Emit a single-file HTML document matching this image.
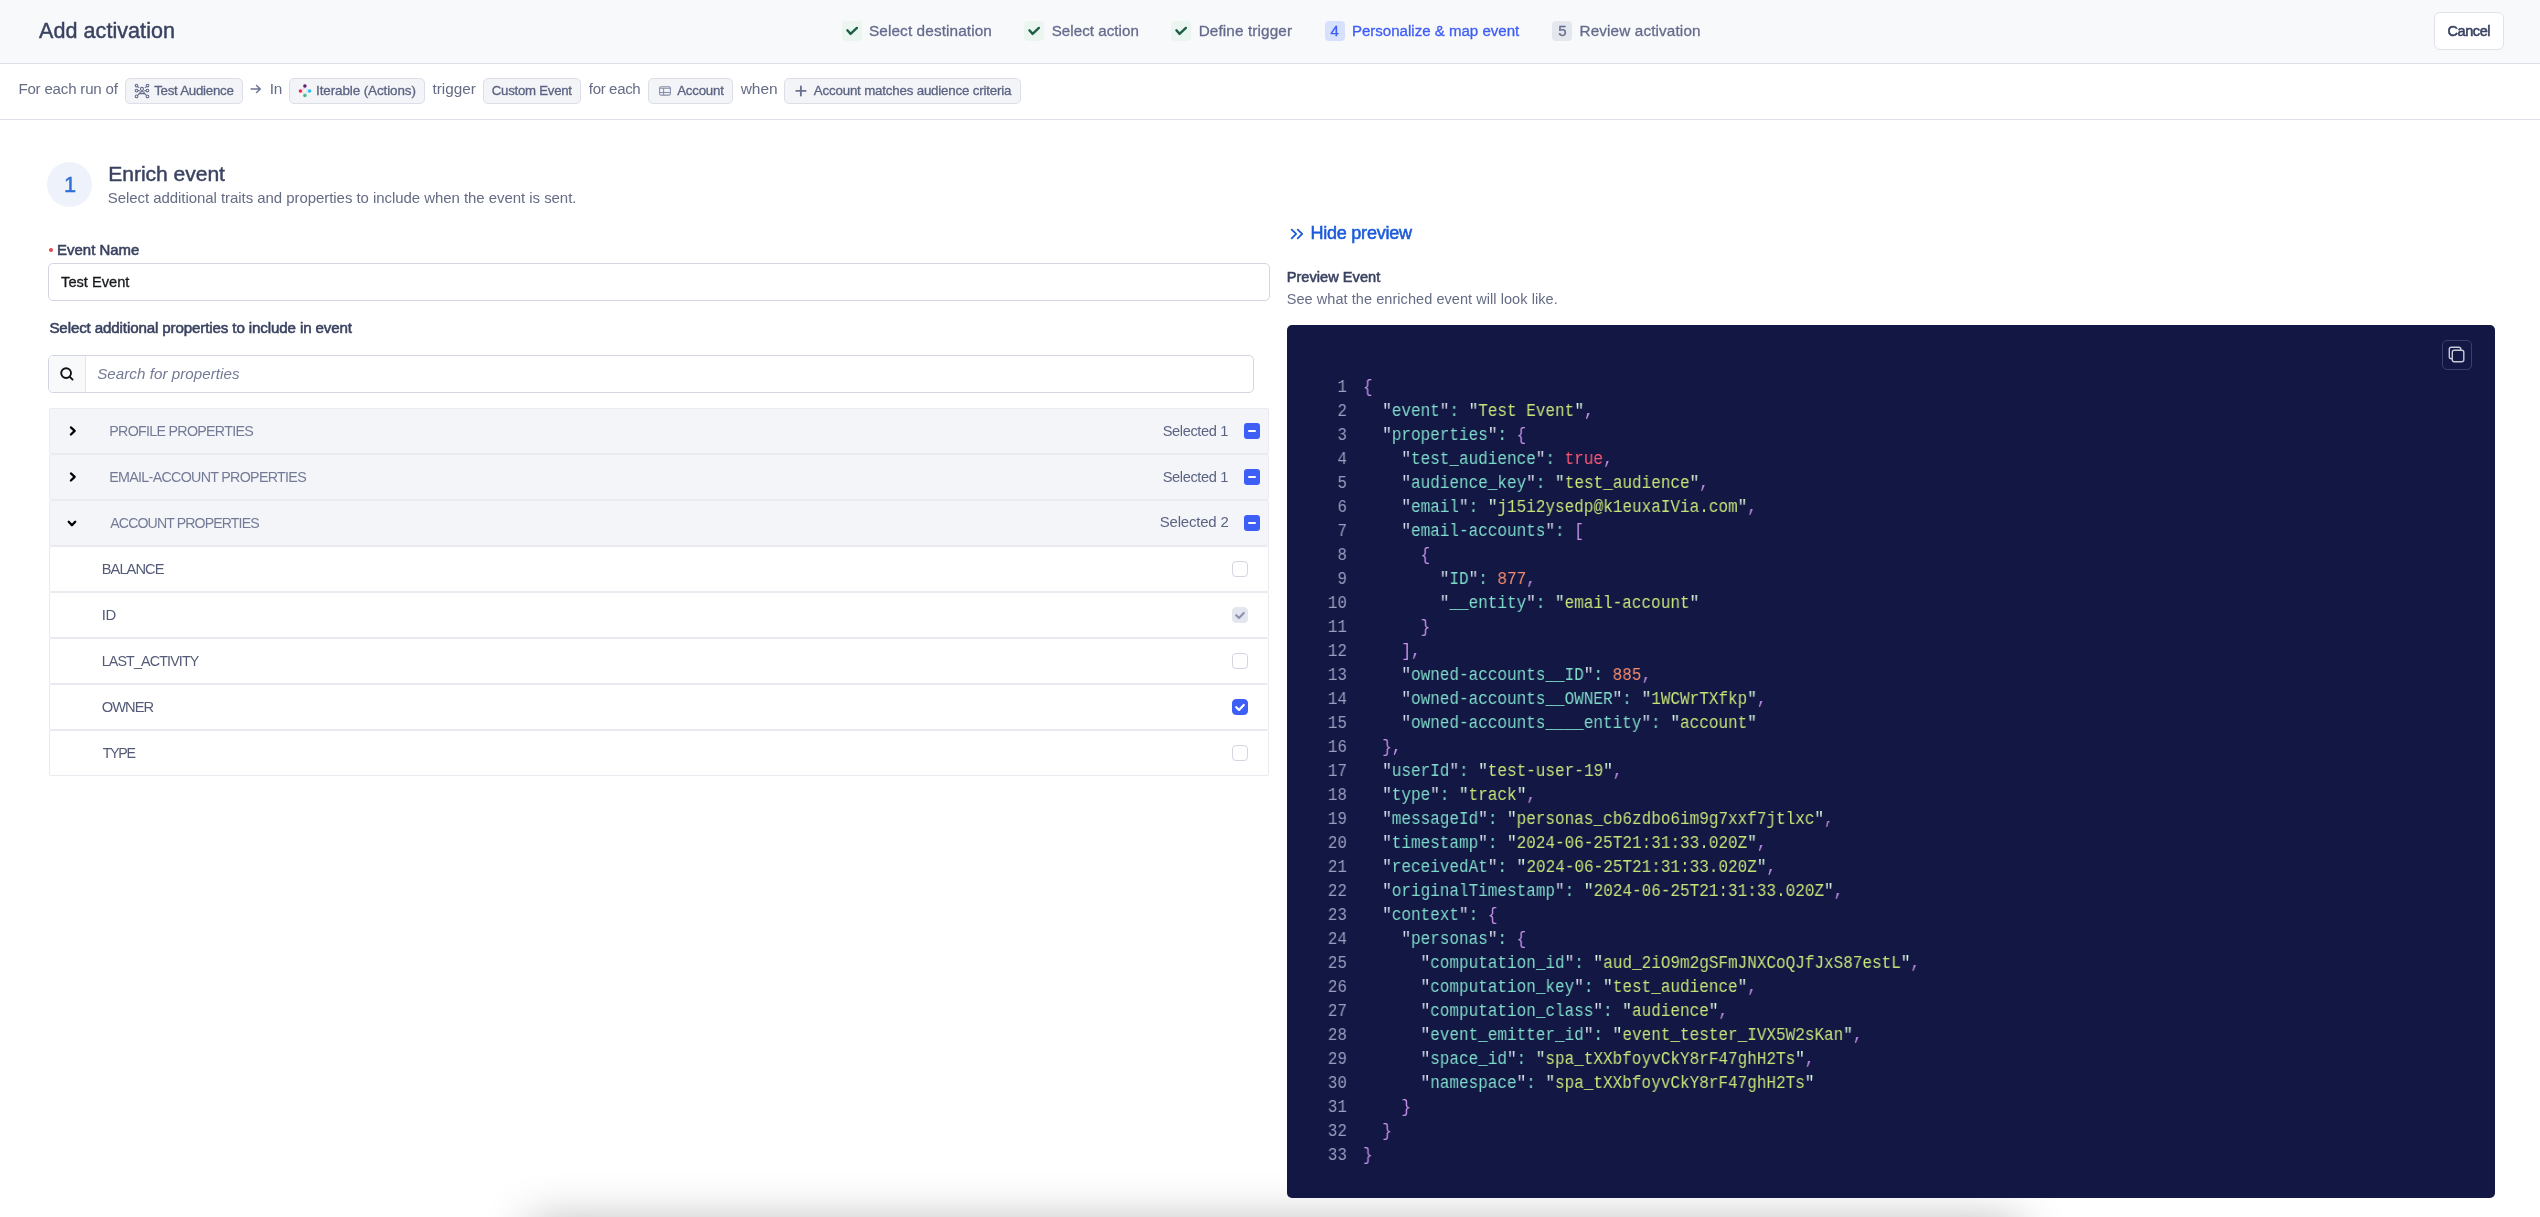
<!DOCTYPE html>
<html><head><meta charset="utf-8"><title>Add activation</title>
<style>
*{box-sizing:border-box;margin:0;padding:0}
html,body{width:2540px;height:1217px;overflow:hidden;background:#fff;font-family:"Liberation Sans",sans-serif}
body{position:relative}
.a{position:absolute}
.t{position:absolute;white-space:nowrap;line-height:1}
.chip{position:absolute;top:78px;height:26px;background:#f3f4f8;border:1px solid #dcdfe8;border-radius:5px}
.sb{position:absolute;top:21px;width:20px;height:20px;border-radius:4px}
.row{position:absolute;left:49px;width:1220px;height:46px;border:1px solid #e9ebf1;border-radius:2px}
.hd{background:#f4f5f9}
.cb{position:absolute;left:1232px;width:16px;height:16px;border-radius:4px;border:1px solid #d3d6e1;background:#fff}
.mb{position:absolute;left:1244px;width:16px;height:16px;border-radius:3px;background:#3e5ff5}
.mb:after{content:"";position:absolute;left:4px;top:7px;width:8px;height:2px;background:#fff;border-radius:1px}
#code{position:absolute;will-change:transform;left:1363.00px;top:0;transform-origin:0 0;transform:scaleX(0.91429);font-family:"Liberation Mono",monospace;font-size:17.50px;line-height:24px;white-space:pre;color:#d6deeb}
#ln{position:absolute;will-change:transform;left:1247px;width:100px;text-align:right;transform-origin:100% 0;transform:scaleX(0.91429);font-family:"Liberation Mono",monospace;font-size:17.50px;line-height:24px;white-space:pre;color:#9a9ebf}
.p{color:#c792ea}.k{color:#7fdbca}.kq{color:#d6deeb}.s{color:#c5e478}.sq{color:#d9f5dd}.b{color:#ff5874}.n{color:#f78c6c}
</style></head><body>

<div class="a" style="left:0;top:0;width:2540px;height:63px;background:#f8f9fb"></div>
<div class="a" style="left:0;top:63px;width:2540px;height:1px;background:#dcdfe7"></div>
<div class="a" style="left:0;top:119px;width:2540px;height:1px;background:#dcdfe7"></div>
<div class="a" style="left:530px;top:1223px;width:1490px;height:80px;background:#fff;box-shadow:0 0 48px rgba(0,0,0,0.30)"></div>
<div class="sb" style="left:842px;background:#ecf6f1"></div>
<svg class="a" style="left:842px;top:21px" width="20" height="20" viewBox="0 0 20 20"><path d="M5.4 9.3 L8.6 12.9 L14.9 6.9" fill="none" stroke="#1e5f48" stroke-width="2.4" stroke-linecap="round" stroke-linejoin="round"/></svg>
<div class="sb" style="left:1024px;background:#ecf6f1"></div>
<svg class="a" style="left:1024px;top:21px" width="20" height="20" viewBox="0 0 20 20"><path d="M5.4 9.3 L8.6 12.9 L14.9 6.9" fill="none" stroke="#1e5f48" stroke-width="2.4" stroke-linecap="round" stroke-linejoin="round"/></svg>
<div class="sb" style="left:1171px;background:#ecf6f1"></div>
<svg class="a" style="left:1171px;top:21px" width="20" height="20" viewBox="0 0 20 20"><path d="M5.4 9.3 L8.6 12.9 L14.9 6.9" fill="none" stroke="#1e5f48" stroke-width="2.4" stroke-linecap="round" stroke-linejoin="round"/></svg>
<div class="sb" style="left:1325px;background:#d7e1fd"></div>
<div class="sb" style="left:1552px;background:#e5e7ee"></div>
<div class="a" style="left:2434px;top:12px;width:70px;height:38px;background:#fff;border:1px solid #e0e3ea;border-radius:6px"></div>
<div class="chip" style="left:125.0px;width:117.5px"></div>
<div class="chip" style="left:289.0px;width:135.7px"></div>
<div class="chip" style="left:483.4px;width:97.2px"></div>
<div class="chip" style="left:648.2px;width:84.4px"></div>
<div class="chip" style="left:784.4px;width:236.2px"></div>
<svg class="a" style="left:130px;top:80px" width="25" height="22" viewBox="130 80 25 22" ><g fill="none" stroke="#636b8b" stroke-width="1.05">
<circle cx="136.5" cy="85.5" r="1.35"/><circle cx="147.5" cy="85.5" r="1.35"/>
<circle cx="136.5" cy="90.6" r="1.35"/><circle cx="147.5" cy="90.6" r="1.35"/>
<circle cx="136.5" cy="96.4" r="1.35"/><circle cx="147.5" cy="96.4" r="1.35"/>
<circle cx="141.95" cy="88.9" r="1.55"/>
<path d="M139.3 93.6 L140.3 91.9 Q142 91.3 143.7 91.9 L144.7 93.6 Z"/>
<path d="M137.6 86.6 L139.2 87.8 M146.4 86.6 L144.8 87.8 M137.9 90.6 L139.6 90.6 M146.1 90.6 L144.4 90.6 M137.6 95.3 L139.2 93.9 M146.4 95.3 L144.8 93.9"/>
</g></svg>
<svg class="a" style="left:294px;top:80px" width="22" height="22" viewBox="294 80 22 22" ><path d="M304.9 86.1 L300.4 90.9 L304.9 95.6 Z" fill="none"/>
<path d="M304.9 86.1 L300.4 90.9 L304.9 90.9 Z" fill="#e4dcef"/>
<path d="M304.9 86.1 L309.6 90.9 L304.9 90.9 Z" fill="#d2eefa"/>
<path d="M300.4 90.9 L304.9 95.6 L304.9 90.9 Z" fill="#f7d9e0"/>
<path d="M309.6 90.9 L304.9 95.6 L304.9 90.9 Z" fill="#d3ede4"/>
<path d="M304.9 88.6 L302.6 90.9 L304.9 93.2 L307.2 90.9 Z" fill="#f3f4f8"/>
<circle cx="304.9" cy="86.1" r="1.75" fill="#5e1a6e"/><circle cx="309.6" cy="90.9" r="1.75" fill="#2fbaf0"/>
<circle cx="304.9" cy="95.6" r="1.75" fill="#47b995"/><circle cx="300.4" cy="90.9" r="1.75" fill="#ee2a48"/></svg>
<svg class="a" style="left:654px;top:82px" width="22" height="18" viewBox="654 82 22 18" ><g fill="none" stroke="#878da8" stroke-width="1.05">
<rect x="659.6" y="86.8" width="10.8" height="8.3" rx="1.3"/>
<path d="M659.6 88.3 H670.4 M659.6 92.4 H670.4 M663.6 88.3 V95.1"/></g></svg>
<svg class="a" style="left:790px;top:80px" width="22" height="22" viewBox="790 80 22 22" ><path d="M800.9 86.5 V95.6 M796.3 90.9 H805.6" stroke="#6a7190" stroke-width="1.9" stroke-linecap="round"/></svg>
<svg class="a" style="left:245px;top:80px" width="20" height="20" viewBox="245 80 20 20" ><path d="M251.1 89 H260.3 M256.5 85.4 L260.3 89 L256.5 92.5" fill="none" stroke="#6b7190" stroke-width="1.4" stroke-linecap="round" stroke-linejoin="round"/></svg>
<div class="a" style="left:47px;top:162px;width:45px;height:45px;border-radius:50%;background:#eef2fb"></div>
<div class="a" style="left:48.8px;top:247.6px;width:4.4px;height:4.4px;border-radius:50%;background:#e5484d"></div>
<div class="a" style="left:48px;top:263px;width:1222px;height:38px;border:1px solid #d3d6e1;border-radius:5px;background:#fff"></div>
<div class="a" style="left:48px;top:355px;width:1206px;height:38px;border:1px solid #d3d6e1;border-radius:5px;background:#fff;overflow:hidden"><div class="a" style="left:0;top:0;width:37px;height:36px;background:#f8f9fb;border-right:1px solid #e3e5ec"></div></div>
<svg class="a" style="left:59px;top:366px" width="16" height="16" viewBox="0 0 16 16" fill="none" stroke="#111" stroke-width="1.9" stroke-linecap="round">
<circle cx="7.1" cy="7.1" r="4.9"/><path d="M10.6 10.6 L13.6 13.6"/></svg>
<div class="row hd" style="top:408px;"></div>
<div class="row hd" style="top:454px;"></div>
<div class="row hd" style="top:500px;"></div>
<div class="row" style="top:546px;background:#fff;"></div>
<div class="row" style="top:592px;background:#fff;"></div>
<div class="row" style="top:638px;background:#fff;"></div>
<div class="row" style="top:684px;background:#fff;"></div>
<div class="row" style="top:730px;background:#fff;"></div>
<svg class="a" style="left:62px;top:420px" width="22" height="22" viewBox="62 420 22 22" ><path d="M70.9 427.4 L74.7 430.9 L70.9 434.5" fill="none" stroke="#000" stroke-width="2.2" stroke-linecap="round" stroke-linejoin="round"/></svg>
<svg class="a" style="left:62px;top:466px" width="22" height="22" viewBox="62 466 22 22" ><path d="M70.9 473.4 L74.7 476.9 L70.9 480.5" fill="none" stroke="#000" stroke-width="2.2" stroke-linecap="round" stroke-linejoin="round"/></svg>
<svg class="a" style="left:62px;top:512px" width="22" height="22" viewBox="62 512 22 22" ><path d="M68.7 521.8 L71.95 525.2 L75.2 521.8" fill="none" stroke="#000" stroke-width="2.3" stroke-linecap="round" stroke-linejoin="round"/></svg>
<div class="mb" style="top:423px"></div>
<div class="mb" style="top:469px"></div>
<div class="mb" style="top:515px"></div>
<div class="cb" style="top:561px"></div>
<div class="cb" style="top:607px;background:#e3e6ef;border-color:#e3e6ef"></div>
<svg class="a" style="left:1232px;top:607px" width="16" height="16" viewBox="0 0 16 16" fill="none" stroke="#8e92b1" stroke-width="2.2" stroke-linecap="round" stroke-linejoin="round"><path d="M4.2 8.2 L7 10.9 L11.8 6"/></svg>
<div class="cb" style="top:653px"></div>
<div class="cb" style="top:699px;background:#3e5ff5;border-color:#3e5ff5"></div>
<svg class="a" style="left:1232px;top:699px" width="16" height="16" viewBox="0 0 16 16" fill="none" stroke="#fff" stroke-width="2.2" stroke-linecap="round" stroke-linejoin="round"><path d="M4.2 8.2 L7 10.9 L11.8 6"/></svg>
<div class="cb" style="top:745px"></div>
<svg class="a" style="left:1284px;top:222px" width="26" height="24" viewBox="1284 222 26 24" ><path d="M1291.7 229.7 L1296.2 233.9 L1291.7 238.4 M1297.7 229.7 L1302.2 233.9 L1297.7 238.4" fill="none" stroke="#1c5bd8" stroke-width="1.8" stroke-linecap="round" stroke-linejoin="round"/></svg>
<div class="a" style="left:1287px;top:325px;width:1208px;height:873px;background:#131744;border-radius:5px"></div>
<div class="a" style="left:2442px;top:340px;width:30px;height:30px;border:1px solid #3a3f6c;border-radius:5px"></div>
<svg class="a" style="left:2442px;top:340px" width="30" height="30" viewBox="0 0 30 30" fill="none" stroke="#c9cad8" stroke-width="1.4">
<rect x="7.3" y="7.3" width="11.5" height="11.5" rx="2"/><rect x="10.3" y="10.3" width="11.5" height="11.5" rx="2" fill="#131744"/></svg>
<div class="a" style="left:0;top:0;width:2540px;height:1217px;will-change:transform">
<div class="t" style="left:39.10px;top:20.61px;font-size:21.51px;letter-spacing:0.062px;color:#3a4260;-webkit-text-stroke:0.45px #3a4260;">Add activation</div>
<div class="t" style="left:869.00px;top:22.74px;font-size:15.37px;letter-spacing:0.094px;color:#646b8c;-webkit-text-stroke:0.30px #646b8c;">Select destination</div>
<div class="t" style="left:1051.70px;top:23.04px;font-size:15.13px;letter-spacing:0.050px;color:#646b8c;-webkit-text-stroke:0.30px #646b8c;">Select action</div>
<div class="t" style="left:1198.70px;top:22.90px;font-size:15.29px;letter-spacing:0.123px;color:#646b8c;-webkit-text-stroke:0.30px #646b8c;">Define trigger</div>
<div class="t" style="left:1351.90px;top:23.09px;font-size:15.07px;letter-spacing:-0.005px;color:#3d5cf7;-webkit-text-stroke:0.30px #3d5cf7;">Personalize &amp; map event</div>
<div class="t" style="left:1579.50px;top:22.91px;font-size:15.28px;letter-spacing:0.138px;color:#646b8c;-webkit-text-stroke:0.30px #646b8c;">Review activation</div>
<div class="t" style="left:1330.60px;top:23.19px;font-size:15.07px;letter-spacing:0.000px;color:#3d5cf7;-webkit-text-stroke:0.30px #3d5cf7;">4</div>
<div class="t" style="left:1558.20px;top:23.19px;font-size:15.07px;letter-spacing:0.000px;color:#646b8c;-webkit-text-stroke:0.30px #646b8c;">5</div>
<div class="t" style="left:2447.60px;top:23.76px;font-size:14.52px;letter-spacing:-0.460px;color:#3a4260;-webkit-text-stroke:0.55px #3a4260;">Cancel</div>
<div class="t" style="left:18.40px;top:81.08px;font-size:15.08px;letter-spacing:-0.193px;color:#656c85;">For each run of</div>
<div class="t" style="left:154.20px;top:83.86px;font-size:13.34px;letter-spacing:-0.275px;color:#5b6382;-webkit-text-stroke:0.30px #5b6382;">Test Audience</div>
<div class="t" style="left:269.70px;top:80.90px;font-size:15.30px;letter-spacing:-0.300px;color:#656c85;">In</div>
<div class="t" style="left:316.10px;top:83.77px;font-size:13.45px;letter-spacing:-0.106px;color:#5b6382;-webkit-text-stroke:0.30px #5b6382;">Iterable (Actions)</div>
<div class="t" style="left:432.60px;top:80.90px;font-size:15.30px;letter-spacing:-0.033px;color:#656c85;">trigger</div>
<div class="t" style="left:491.80px;top:83.95px;font-size:13.23px;letter-spacing:-0.255px;color:#5b6382;-webkit-text-stroke:0.30px #5b6382;">Custom Event</div>
<div class="t" style="left:588.80px;top:81.13px;font-size:15.03px;letter-spacing:-0.343px;color:#656c85;">for each</div>
<div class="t" style="left:677.20px;top:83.90px;font-size:13.30px;letter-spacing:-0.233px;color:#5b6382;-webkit-text-stroke:0.30px #5b6382;">Account</div>
<div class="t" style="left:740.70px;top:80.74px;font-size:15.49px;letter-spacing:-0.033px;color:#656c85;">when</div>
<div class="t" style="left:813.80px;top:83.86px;font-size:13.34px;letter-spacing:-0.191px;color:#5b6382;-webkit-text-stroke:0.30px #5b6382;">Account matches audience criteria</div>
<div class="t" style="left:64.00px;top:173.62px;font-size:21.74px;letter-spacing:0.000px;color:#2f6fd6;-webkit-text-stroke:0.45px #2f6fd6;">1</div>
<div class="t" style="left:108.20px;top:163.08px;font-size:21.09px;letter-spacing:-0.036px;color:#3a4260;-webkit-text-stroke:0.45px #3a4260;">Enrich event</div>
<div class="t" style="left:107.70px;top:190.47px;font-size:14.98px;letter-spacing:-0.042px;color:#656c85;">Select additional traits and properties to include when the event is sent.</div>
<div class="t" style="left:57.00px;top:242.50px;font-size:14.95px;letter-spacing:0.022px;color:#3a4260;-webkit-text-stroke:0.55px #3a4260;">Event Name</div>
<div class="t" style="left:61.10px;top:275.36px;font-size:14.64px;letter-spacing:0.000px;color:#16181d;-webkit-text-stroke:0.30px #16181d;">Test Event</div>
<div class="t" style="left:49.40px;top:320.40px;font-size:15.17px;letter-spacing:-0.140px;color:#3a4260;-webkit-text-stroke:0.55px #3a4260;">Select additional properties to include in event</div>
<div class="t" style="left:97.20px;top:366.11px;font-size:15.17px;letter-spacing:0.040px;color:#737a94;font-style:italic;">Search for properties</div>
<div class="t" style="left:109.30px;top:424.08px;font-size:14.25px;letter-spacing:-0.712px;color:#737a96;">PROFILE PROPERTIES</div>
<div class="t" style="left:109.30px;top:470.06px;font-size:14.28px;letter-spacing:-0.700px;color:#737a96;">EMAIL-ACCOUNT PROPERTIES</div>
<div class="t" style="left:110.30px;top:516.20px;font-size:14.12px;letter-spacing:-0.871px;color:#737a96;">ACCOUNT PROPERTIES</div>
<div class="t" style="left:1162.70px;top:423.75px;font-size:14.65px;letter-spacing:-0.400px;color:#5b6382;">Selected 1</div>
<div class="t" style="left:1162.70px;top:469.75px;font-size:14.65px;letter-spacing:-0.400px;color:#5b6382;">Selected 1</div>
<div class="t" style="left:1159.80px;top:515.48px;font-size:14.96px;letter-spacing:-0.189px;color:#5b6382;">Selected 2</div>
<div class="t" style="left:101.70px;top:562.08px;font-size:14.62px;letter-spacing:-0.900px;color:#545b78;">BALANCE</div>
<div class="t" style="left:101.70px;top:607.86px;font-size:14.87px;letter-spacing:-0.400px;color:#545b78;">ID</div>
<div class="t" style="left:101.70px;top:654.35px;font-size:14.29px;letter-spacing:-0.858px;color:#545b78;">LAST_ACTIVITY</div>
<div class="t" style="left:101.70px;top:699.99px;font-size:14.72px;letter-spacing:-0.975px;color:#545b78;">OWNER</div>
<div class="t" style="left:102.70px;top:746.36px;font-size:14.28px;letter-spacing:-1.333px;color:#545b78;">TYPE</div>
<div class="t" style="left:1310.40px;top:223.99px;font-size:18.02px;letter-spacing:-0.227px;color:#1c5bd8;-webkit-text-stroke:0.55px #1c5bd8;">Hide preview</div>
<div class="t" style="left:1286.70px;top:269.99px;font-size:14.60px;letter-spacing:0.025px;color:#3a4260;-webkit-text-stroke:0.55px #3a4260;">Preview Event</div>
<div class="t" style="left:1286.70px;top:291.56px;font-size:14.52px;letter-spacing:0.055px;color:#656c85;">See what the enriched event will look like.</div>
</div>
<div id="ln" style="top:374.64px">1
2
3
4
5
6
7
8
9
10
11
12
13
14
15
16
17
18
19
20
21
22
23
24
25
26
27
28
29
30
31
32
33</div>
<div id="code" style="top:374.64px"><span class="p">{</span>
  <span class="kq">"</span><span class="k">event</span><span class="kq">"</span><span class="k">:</span> <span class="sq">"</span><span class="s">Test Event</span><span class="sq">"</span><span class="p">,</span>
  <span class="kq">"</span><span class="k">properties</span><span class="kq">"</span><span class="k">:</span> <span class="p">{</span>
    <span class="kq">"</span><span class="k">test_audience</span><span class="kq">"</span><span class="k">:</span> <span class="b">true</span><span class="p">,</span>
    <span class="kq">"</span><span class="k">audience_key</span><span class="kq">"</span><span class="k">:</span> <span class="sq">"</span><span class="s">test_audience</span><span class="sq">"</span><span class="p">,</span>
    <span class="kq">"</span><span class="k">email</span><span class="kq">"</span><span class="k">:</span> <span class="sq">"</span><span class="s">j15i2ysedp@k1euxaIVia.com</span><span class="sq">"</span><span class="p">,</span>
    <span class="kq">"</span><span class="k">email-accounts</span><span class="kq">"</span><span class="k">:</span> <span class="p">[</span>
      <span class="p">{</span>
        <span class="kq">"</span><span class="k">ID</span><span class="kq">"</span><span class="k">:</span> <span class="n">877</span><span class="p">,</span>
        <span class="kq">"</span><span class="k">__entity</span><span class="kq">"</span><span class="k">:</span> <span class="sq">"</span><span class="s">email-account</span><span class="sq">"</span>
      <span class="p">}</span>
    <span class="p">],</span>
    <span class="kq">"</span><span class="k">owned-accounts__ID</span><span class="kq">"</span><span class="k">:</span> <span class="n">885</span><span class="p">,</span>
    <span class="kq">"</span><span class="k">owned-accounts__OWNER</span><span class="kq">"</span><span class="k">:</span> <span class="sq">"</span><span class="s">1WCWrTXfkp</span><span class="sq">"</span><span class="p">,</span>
    <span class="kq">"</span><span class="k">owned-accounts____entity</span><span class="kq">"</span><span class="k">:</span> <span class="sq">"</span><span class="s">account</span><span class="sq">"</span>
  <span class="p">},</span>
  <span class="kq">"</span><span class="k">userId</span><span class="kq">"</span><span class="k">:</span> <span class="sq">"</span><span class="s">test-user-19</span><span class="sq">"</span><span class="p">,</span>
  <span class="kq">"</span><span class="k">type</span><span class="kq">"</span><span class="k">:</span> <span class="sq">"</span><span class="s">track</span><span class="sq">"</span><span class="p">,</span>
  <span class="kq">"</span><span class="k">messageId</span><span class="kq">"</span><span class="k">:</span> <span class="sq">"</span><span class="s">personas_cb6zdbo6im9g7xxf7jtlxc</span><span class="sq">"</span><span class="p">,</span>
  <span class="kq">"</span><span class="k">timestamp</span><span class="kq">"</span><span class="k">:</span> <span class="sq">"</span><span class="s">2024-06-25T21:31:33.020Z</span><span class="sq">"</span><span class="p">,</span>
  <span class="kq">"</span><span class="k">receivedAt</span><span class="kq">"</span><span class="k">:</span> <span class="sq">"</span><span class="s">2024-06-25T21:31:33.020Z</span><span class="sq">"</span><span class="p">,</span>
  <span class="kq">"</span><span class="k">originalTimestamp</span><span class="kq">"</span><span class="k">:</span> <span class="sq">"</span><span class="s">2024-06-25T21:31:33.020Z</span><span class="sq">"</span><span class="p">,</span>
  <span class="kq">"</span><span class="k">context</span><span class="kq">"</span><span class="k">:</span> <span class="p">{</span>
    <span class="kq">"</span><span class="k">personas</span><span class="kq">"</span><span class="k">:</span> <span class="p">{</span>
      <span class="kq">"</span><span class="k">computation_id</span><span class="kq">"</span><span class="k">:</span> <span class="sq">"</span><span class="s">aud_2iO9m2gSFmJNXCoQJfJxS87estL</span><span class="sq">"</span><span class="p">,</span>
      <span class="kq">"</span><span class="k">computation_key</span><span class="kq">"</span><span class="k">:</span> <span class="sq">"</span><span class="s">test_audience</span><span class="sq">"</span><span class="p">,</span>
      <span class="kq">"</span><span class="k">computation_class</span><span class="kq">"</span><span class="k">:</span> <span class="sq">"</span><span class="s">audience</span><span class="sq">"</span><span class="p">,</span>
      <span class="kq">"</span><span class="k">event_emitter_id</span><span class="kq">"</span><span class="k">:</span> <span class="sq">"</span><span class="s">event_tester_IVX5W2sKan</span><span class="sq">"</span><span class="p">,</span>
      <span class="kq">"</span><span class="k">space_id</span><span class="kq">"</span><span class="k">:</span> <span class="sq">"</span><span class="s">spa_tXXbfoyvCkY8rF47ghH2Ts</span><span class="sq">"</span><span class="p">,</span>
      <span class="kq">"</span><span class="k">namespace</span><span class="kq">"</span><span class="k">:</span> <span class="sq">"</span><span class="s">spa_tXXbfoyvCkY8rF47ghH2Ts</span><span class="sq">"</span>
    <span class="p">}</span>
  <span class="p">}</span>
<span class="p">}</span></div>
</body></html>
